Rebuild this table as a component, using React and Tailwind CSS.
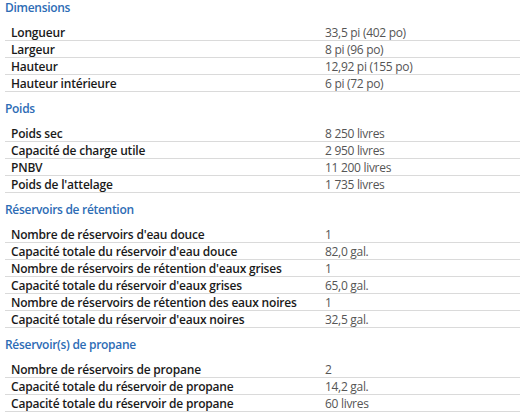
import React from 'react';

const sections = [
  {
    title: 'Dimensions',
    rows: [
      ['Longueur', '33,5 pi (402 po)'],
      ['Largeur', '8 pi (96 po)'],
      ['Hauteur', '12,92 pi (155 po)'],
      ['Hauteur intérieure', '6 pi (72 po)'],
    ],
  },
  {
    title: 'Poids',
    rows: [
      ['Poids sec', '8 250 livres'],
      ['Capacité de charge utile', '2 950 livres'],
      ['PNBV', '11 200 livres'],
      ["Poids de l'attelage", '1 735 livres'],
    ],
  },
  {
    title: 'Réservoirs de rétention',
    rows: [
      ["Nombre de réservoirs d'eau douce", '1'],
      ["Capacité totale du réservoir d'eau douce", '82,0 gal.'],
      ["Nombre de réservoirs de rétention d'eaux grises", '1'],
      ["Capacité totale du réservoir d'eaux grises", '65,0 gal.'],
      ['Nombre de réservoirs de rétention des eaux noires', '1'],
      ["Capacité totale du réservoir d'eaux noires", '32,5 gal.'],
    ],
  },
  {
    title: 'Réservoir(s) de propane',
    rows: [
      ['Nombre de réservoirs de propane', '2'],
      ['Capacité totale du réservoir de propane', '14,2 gal.'],
      ['Capacité totale du réservoir de propane', '60 livres'],
    ],
  },
];

function App() {
  return (
    <div className="bg-white w-[520px] h-[419px] overflow-hidden pl-[5px] font-['Open_Sans',sans-serif] text-[12px]">
      {sections.map((section, i) => (
        <div key={section.title} className={i > 0 ? 'mt-[9px]' : ''}>
          <h2 className="h-6 leading-4 font-semibold text-[#2d6cb5] tracking-[-0.3px]">
            {section.title}
          </h2>
          {section.rows.map((row, j) => (
            <div key={j} className="grid grid-cols-[320px_1fr] h-[17px] pt-px border-b border-[#dadada] leading-4">
              <span className="pl-1.5 font-semibold text-[#1a1a1a] tracking-[-0.2px] whitespace-nowrap">{row[0]}</span>
              <span className="text-[#555] tracking-[-0.3px] whitespace-nowrap">{row[1]}</span>
            </div>
          ))}
        </div>
      ))}
    </div>
  );
}

export default App;
